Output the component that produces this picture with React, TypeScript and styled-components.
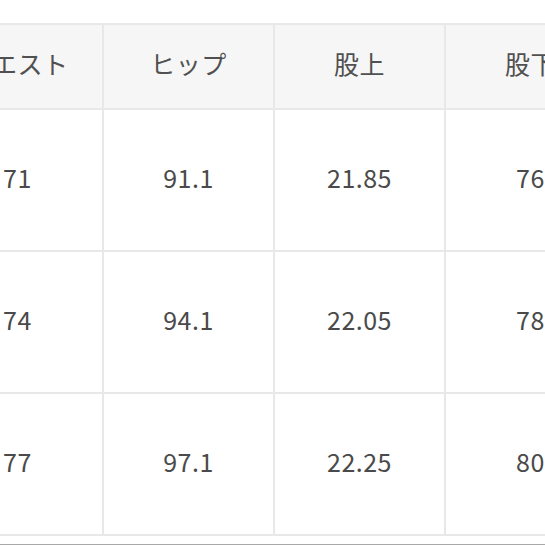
import React from "react";
import styled, { createGlobalStyle } from "styled-components";

const Global = createGlobalStyle`
  html, body {
    margin: 0;
    padding: 0;
    background: #ffffff;
    overflow: hidden;
    width: 545px;
    height: 545px;
  }
  body {
    font-family: "Noto Sans CJK JP", "Noto Sans", sans-serif;
  }
`;

const Page = styled.div`
  width: 545px;
  height: 545px;
  overflow: hidden;
  padding-top: 23px;
  box-sizing: border-box;
  display: flex;
  flex-direction: column;
`;

const Table = styled.div`
  margin-left: -69px;
  display: grid;
  grid-template-columns: repeat(4, 169px);
  grid-auto-rows: 140px;
  grid-template-rows: 83px;
  gap: 2px;
  padding: 2px;
  background: #e8e8e8;
  width: max-content;
`;

const Cell = styled.div<{ $head?: boolean }>`
  background: ${(p) => (p.$head ? "#f6f6f6" : "#ffffff")};
  display: flex;
  align-items: center;
  justify-content: center;
  box-sizing: border-box;
  padding-bottom: ${(p) => (p.$head ? "7px" : "6px")};
  font-size: 25px;
  line-height: 1;
  color: ${(p) => (p.$head ? "#505050" : "#4a4a4a")};
  white-space: nowrap;
  letter-spacing: 0.5px;
`;

const Divider = styled.div`
  margin-top: 8px;
  height: 1px;
  background: #a8a8a8;
`;

const headers = ["ウエスト", "ヒップ", "股上", "股下"];
const rows = [
  ["71", "91.1", "21.85", "76"],
  ["74", "94.1", "22.05", "78"],
  ["77", "97.1", "22.25", "80"],
];

export default function App() {
  return (
    <>
      <Global />
      <Page>
        <Table>
          {headers.map((h) => (
            <Cell key={h} $head>
              {h}
            </Cell>
          ))}
          {rows.map((r, i) =>
            r.map((v, j) => <Cell key={`${i}-${j}`}>{v}</Cell>)
          )}
        </Table>
        <Divider />
      </Page>
    </>
  );
}
